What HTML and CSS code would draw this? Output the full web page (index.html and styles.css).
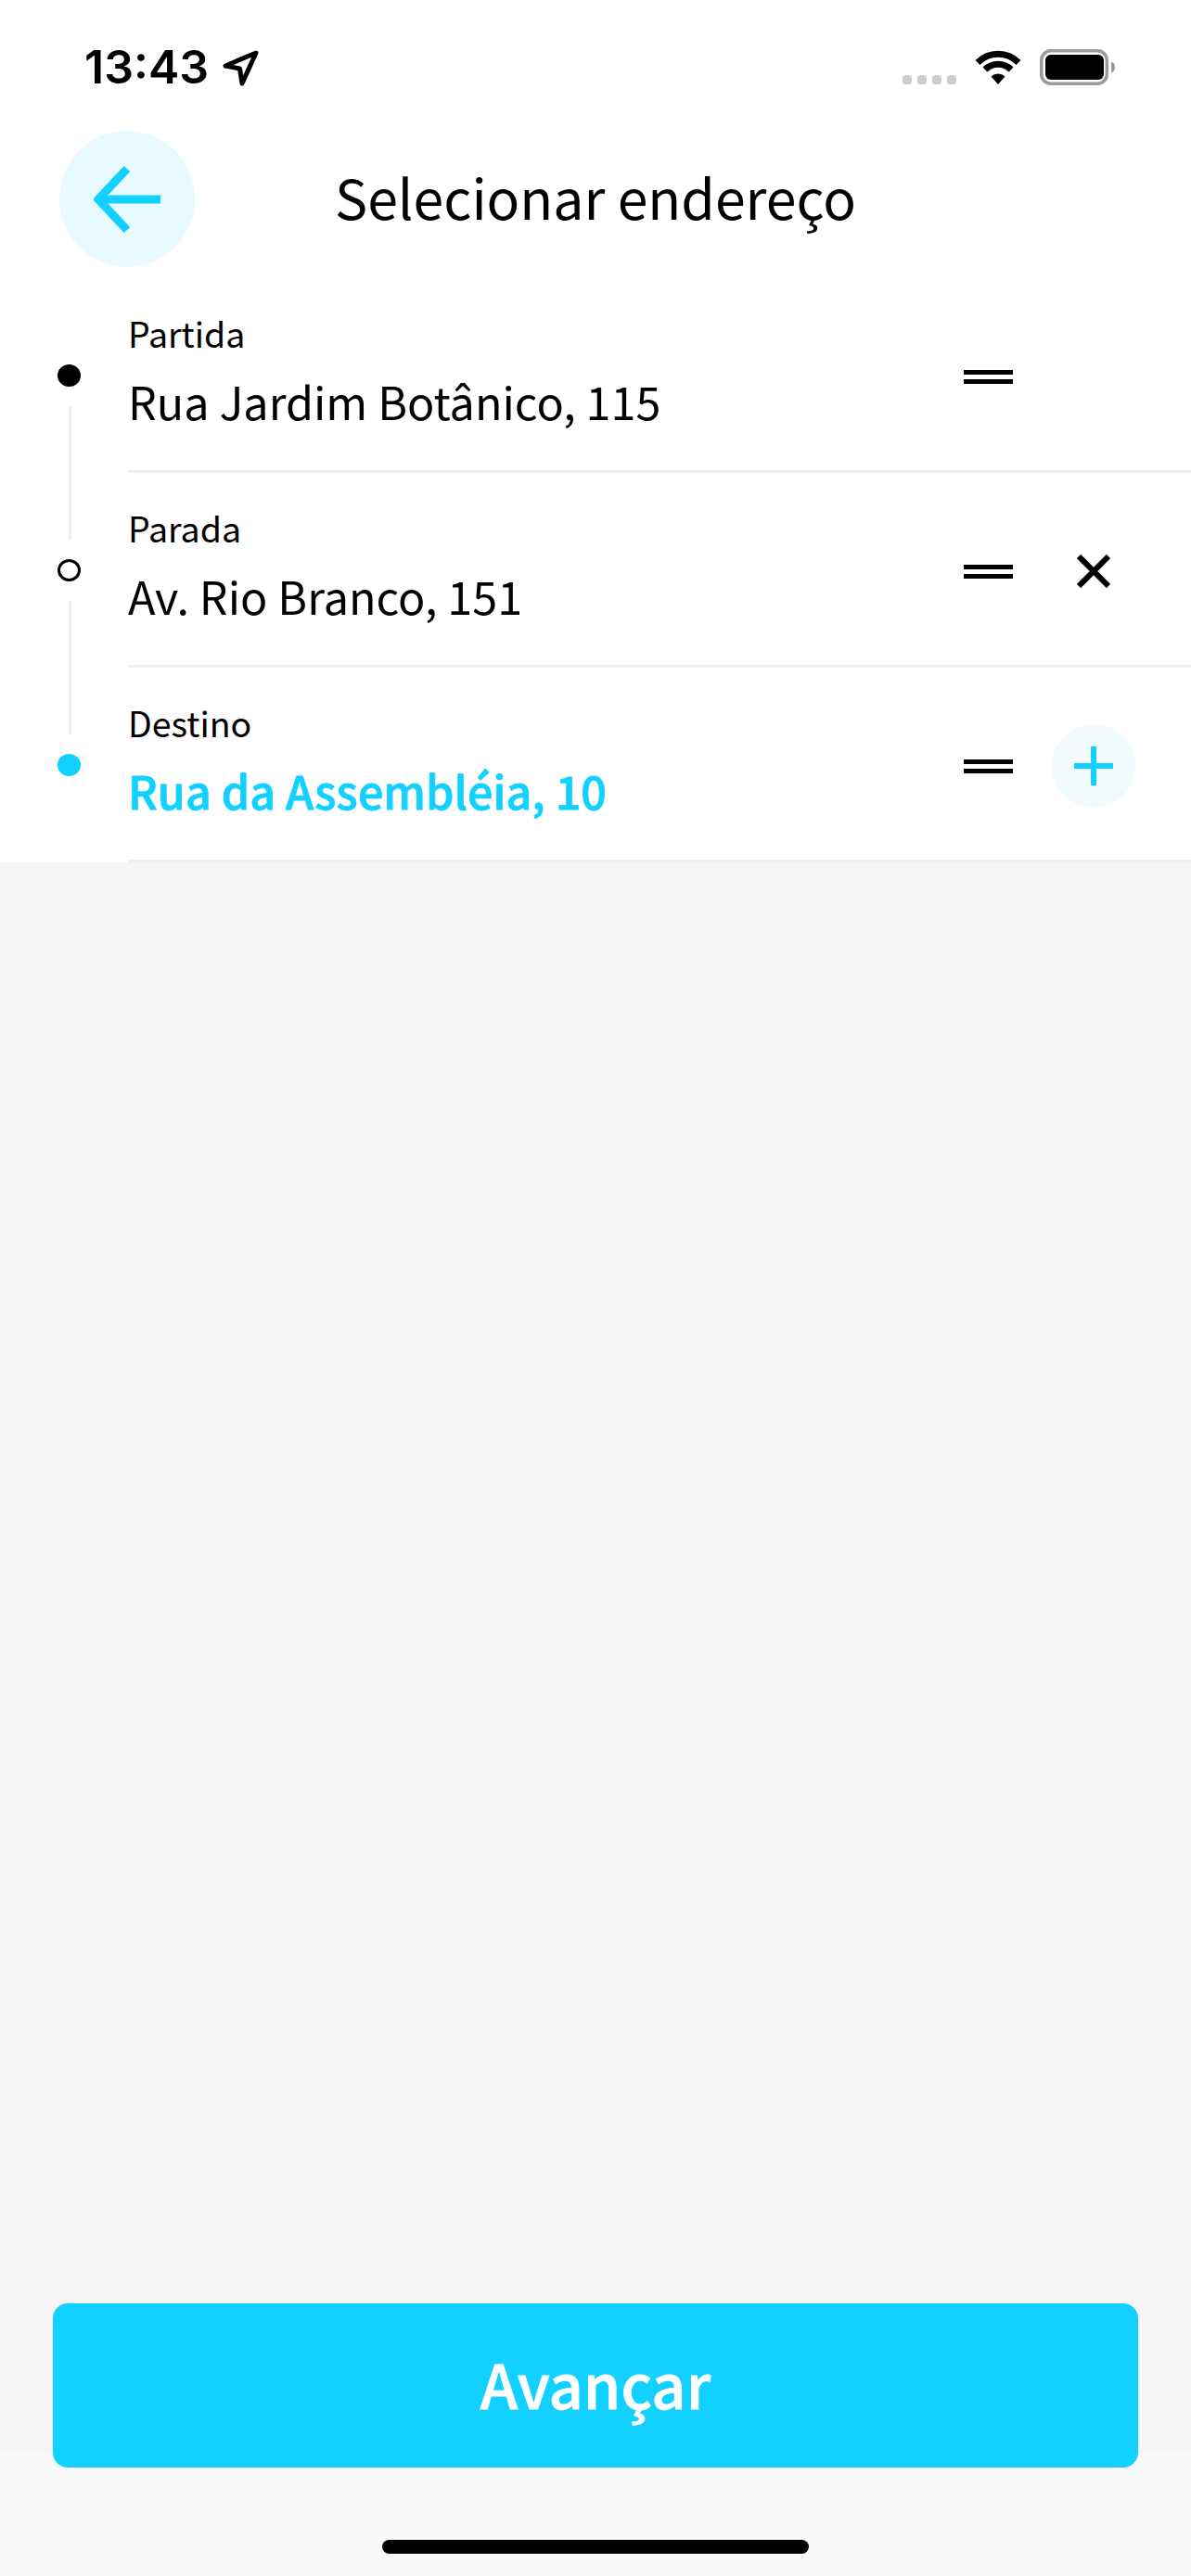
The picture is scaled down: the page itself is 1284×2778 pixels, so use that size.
FILE: index.html
```html
<!DOCTYPE html>
<html lang="pt-BR">
<head>
<meta charset="UTF-8">
<meta name="viewport" content="width=device-width, initial-scale=1.0">
<title>Selecionar endereço</title>
<link rel="stylesheet" href="styles.css">
</head>
<body>
<div class="app">
  <div class="status-bar">
    <div class="status-time">
      <span>13:43</span>
      <svg class="icon-location" viewBox="0 0 42 40"><path d="M5 18 L38 4 L23 37 L20.5 21 Z"/></svg>
    </div>
    <div class="status-icons">
      <div class="signal"><i></i><i></i><i></i><i></i></div>
      <svg class="icon-wifi" viewBox="0 0 50 37">
        <path class="wifi-arc" d="M3 13.5 A31 31 0 0 1 47 13.5"/>
        <path class="wifi-arc" d="M11 21 A20 20 0 0 1 39 21"/>
        <path d="M17.5 28.5 A11 11 0 0 1 32.5 28.5 L25 37 Z"/>
      </svg>
      <svg class="icon-battery" viewBox="0 0 82 39">
        <rect x="1.75" y="1.75" width="70.5" height="35.5" rx="10" fill="none" stroke="#9b9b9b" stroke-width="3.5"/>
        <rect x="6" y="6" width="63" height="27" rx="6"/>
        <path d="M77 14 A4 5.5 0 0 1 77 25 Z" fill="#9b9b9b"/>
      </svg>
    </div>
  </div>

  <header class="header">
    <button class="back-btn" type="button">
      <svg viewBox="0 0 72 72"><path d="M36 3 L5 36 L36 69 M5 36 H72"/></svg>
    </button>
    <h1 class="title">Selecionar endereço</h1>
  </header>

  <section class="route">
    <div class="rail">
      <span class="dot dot-start"></span>
      <span class="rail-line"></span>
      <span class="dot dot-stop"></span>
      <span class="rail-line"></span>
      <span class="dot dot-end"></span>
    </div>
    <ul class="stops">
      <li class="stop">
        <div class="stop-text">
          <span class="stop-label">Partida</span>
          <span class="stop-value">Rua Jardim Botânico, 115</span>
        </div>
        <span class="grip"></span>
        <span class="stop-action"></span>
      </li>
      <li class="stop">
        <div class="stop-text">
          <span class="stop-label">Parada</span>
          <span class="stop-value">Av. Rio Branco, 151</span>
        </div>
        <span class="grip"></span>
        <span class="stop-action">
          <svg class="icon-close" viewBox="0 0 36 36"><path d="M2 2 L34 34 M34 2 L2 34"/></svg>
        </span>
      </li>
      <li class="stop">
        <div class="stop-text">
          <span class="stop-label">Destino</span>
          <span class="stop-value stop-value-active">Rua da Assembléia, 10</span>
        </div>
        <span class="grip"></span>
        <span class="stop-action add-btn">
          <svg class="icon-plus" viewBox="0 0 42 42"><path d="M21 0 V42 M0 21 H42"/></svg>
        </span>
      </li>
    </ul>
  </section>

  <div class="spacer"></div>

  <footer class="footer">
    <button class="next-btn" type="button">Avançar</button>
    <div class="home-bar"></div>
  </footer>
</div>
</body>
</html>
```

FILE: styles.css
```css
* {
  box-sizing: border-box;
}
body {
  margin: 0;
  padding: 0;
  background: #f5f5f6;
  font-family: "Noto Sans CJK JP", "Noto Sans", sans-serif;
  color: #000;
}
.app {
  width: 1284px;
  height: 2778px;
  display: flex;
  flex-direction: column;
  overflow: hidden;
}

/* status bar */
.status-bar {
  height: 141px;
  padding: 53px 81px 0 91px;
  background: #fff;
  display: flex;
  justify-content: space-between;
  align-items: flex-start;
}
.status-time {
  display: flex;
  align-items: center;
  gap: 13px;
  height: 39px;
  font-family: Inter, sans-serif;
  font-weight: 600;
  font-size: 50px;
  line-height: 39px;
}
.icon-location {
  width: 42px;
  height: 40px;
  fill: none;
  stroke: #000;
  stroke-width: 5;
  stroke-linejoin: round;
}
.status-icons {
  display: flex;
  align-items: flex-end;
  gap: 20px;
  height: 39px;
}
.signal {
  display: flex;
  gap: 6px;
  margin-bottom: 1px;
}
.signal i {
  width: 10px;
  height: 10px;
  border-radius: 3px;
  background: #cdcdcd;
}
.icon-wifi {
  width: 50px;
  height: 37px;
  margin-bottom: 1px;
}
.wifi-arc {
  fill: none;
  stroke: #000;
  stroke-width: 7;
}
.icon-battery {
  width: 82px;
  height: 39px;
}

/* header */
.header {
  height: 159px;
  padding: 0 64px 12px;
  background: #fff;
  display: grid;
  grid-template-columns: 146px 1fr 146px;
  align-items: center;
}
.back-btn {
  width: 146px;
  height: 147px;
  padding: 0;
  border: none;
  border-radius: 50%;
  background: #e6faff;
  display: flex;
  align-items: center;
  justify-content: center;
}
.back-btn svg {
  width: 72px;
  height: 72px;
  fill: none;
  stroke: #12d0ff;
  stroke-width: 9;
}
.title {
  margin: 0 0 5px;
  text-align: center;
  font-size: 59px;
  font-weight: 400;
  line-height: 80px;
}

/* route */
.route {
  height: 630px;
  background: #fff;
  display: flex;
}
.rail {
  width: 138px;
  padding: 93px 0 0 62px;
  display: flex;
  flex-direction: column;
  gap: 21px;
}
.dot {
  width: 25px;
  height: 24px;
  border-radius: 50%;
}
.dot-start {
  background: #000;
}
.dot-stop {
  background: #fff;
  border: 3px solid #000;
}
.dot-end {
  background: #12d0ff;
}
.rail-line {
  width: 3px;
  height: 144px;
  margin-left: 12px;
  background: #ebeff3;
}
.stops {
  flex: 1;
  margin: 0;
  padding: 0;
  list-style-type: none;
}
.stop {
  height: 210px;
  padding: 0 60px 0 0;
  border-bottom: 3px solid #ebeff3;
  display: flex;
  align-items: center;
}
.stop-text {
  flex: 1;
  display: flex;
  flex-direction: column;
  margin-top: -10px;
}
.stop-label {
  font-size: 37.5px;
  line-height: 50px;
}
.stop-value {
  margin-top: 16px;
  font-size: 48.5px;
  line-height: 64px;
}
.stop-value-active {
  color: #12d0ff;
  font-weight: 500;
  -webkit-text-stroke: 0.8px #12d0ff;
}
.grip {
  width: 53px;
  height: 15px;
  margin: 5px 42px 0 0;
  border-top: 5px solid #000;
  border-bottom: 5px solid #000;
}
.stop-action {
  width: 90px;
  height: 90px;
  margin-top: 4px;
  display: flex;
  align-items: center;
  justify-content: center;
}
.add-btn {
  border-radius: 50%;
  background: #f2fcff;
}
.icon-close {
  width: 36px;
  height: 36px;
  fill: none;
  stroke: #000;
  stroke-width: 6;
}
.icon-plus {
  width: 42px;
  height: 42px;
  fill: none;
  stroke: #12d0ff;
  stroke-width: 6;
}

.spacer {
  flex: 1;
}

/* bottom */
.footer {
  padding: 0 57px 24px;
  background: linear-gradient(#f5f5f6 162px, #f9f9f9 162px);
  display: flex;
  flex-direction: column;
  align-items: center;
}
.next-btn {
  width: 100%;
  height: 177px;
  padding: 0 0 5px;
  border: none;
  border-radius: 16px;
  background: #12d0ff;
  color: #fff;
  font-family: inherit;
  font-size: 65px;
  font-weight: 500;
  -webkit-text-stroke: 0.8px #fff;
}
.home-bar {
  width: 460px;
  height: 15px;
  margin-top: 78px;
  border-radius: 8px;
  background: #000;
}
```
